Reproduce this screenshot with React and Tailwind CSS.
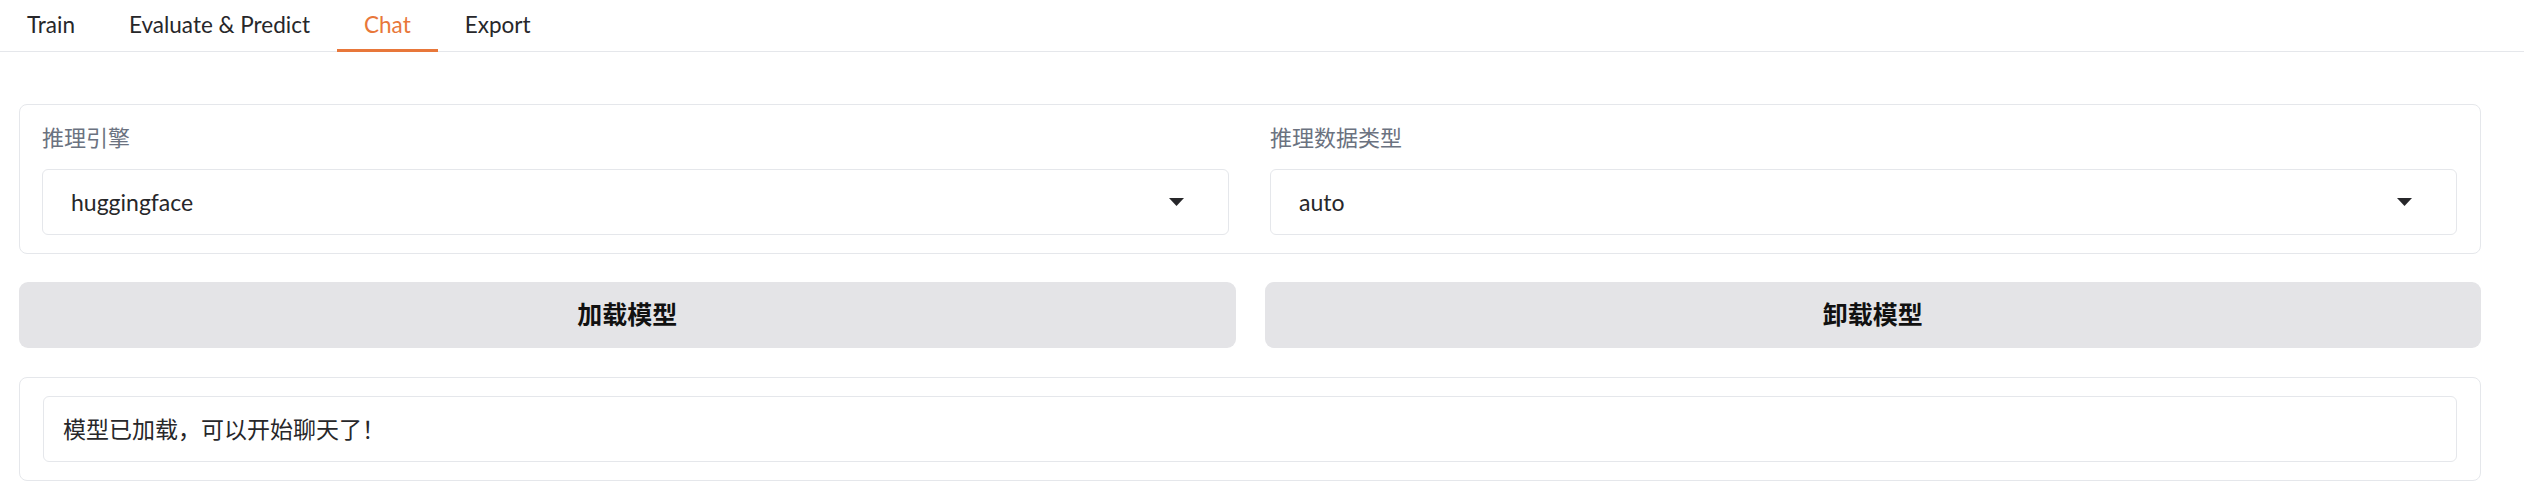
const latin = { fontFamily: 'Lato, "Noto Sans CJK SC", sans-serif' }

function Caret() {
  return (
    <svg width="15" height="8" viewBox="0 0 15 8" className="shrink-0">
      <path d="M0 0h15L7.5 8z" fill="#27272a" />
    </svg>
  )
}

function Dropdown({ label, value }) {
  return (
    <div className="flex-1 flex flex-col">
      <span className="text-[22px] leading-[33px] text-[#6b7280]">{label}</span>
      <div className="mt-[15px] h-[66px] rounded-[6px] border border-[#e5e7eb] bg-white flex items-center justify-between pl-[28px] pr-[44px]">
        <span className="text-[23px] text-[#27272a]">{value}</span>
        <Caret />
      </div>
    </div>
  )
}

export default function App() {
  const tabs = ['Train', 'Evaluate & Predict', 'Chat', 'Export']

  return (
    <div className="w-[2524px] h-[500px] bg-white" style={latin}>
      {/* Tabs */}
      <div className="flex h-[52px] border-b border-[#e5e7eb]">
        {tabs.map((t) => (
          <button
            key={t}
            className={`h-[52px] -mb-px px-[27px] text-[22.5px] border-b-[3px] ${
              t === 'Chat' ? 'border-[#e8773a] text-[#e8773a]' : 'border-transparent text-[#27272a]'
            }`}
          >
            {t}
          </button>
        ))}
      </div>

      <div className="pl-[19px] pr-[43px] pt-[52px] flex flex-col">
        {/* Engine / dtype */}
        <div className="rounded-[8px] border border-[#e5e7eb] bg-white pl-[22px] pr-[23px] pt-[16px] pb-[18px] flex gap-[41px]">
          <Dropdown label="推理引擎" value="huggingface" />
          <Dropdown label="推理数据类型" value="auto" />
        </div>

        {/* Buttons */}
        <div className="mt-[28px] flex gap-[29px]">
          <button className="flex-1 h-[66px] rounded-[9px] bg-[#e4e4e7] text-[25px] font-bold text-[#111111]">
            加载模型
          </button>
          <button className="flex-1 h-[66px] rounded-[9px] bg-[#e4e4e7] text-[25px] font-bold text-[#111111]">
            卸载模型
          </button>
        </div>

        {/* Status */}
        <div className="mt-[29px] rounded-[8px] border border-[#e5e7eb] bg-white pl-[23px] pr-[23px] pt-[18px] pb-[18px]">
          <div className="h-[66px] rounded-[6px] border border-[#e5e7eb] flex items-center pl-[19px]">
            <span className="text-[23px] text-[#27272a]">模型已加载，可以开始聊天了！</span>
          </div>
        </div>
      </div>
    </div>
  )
}
